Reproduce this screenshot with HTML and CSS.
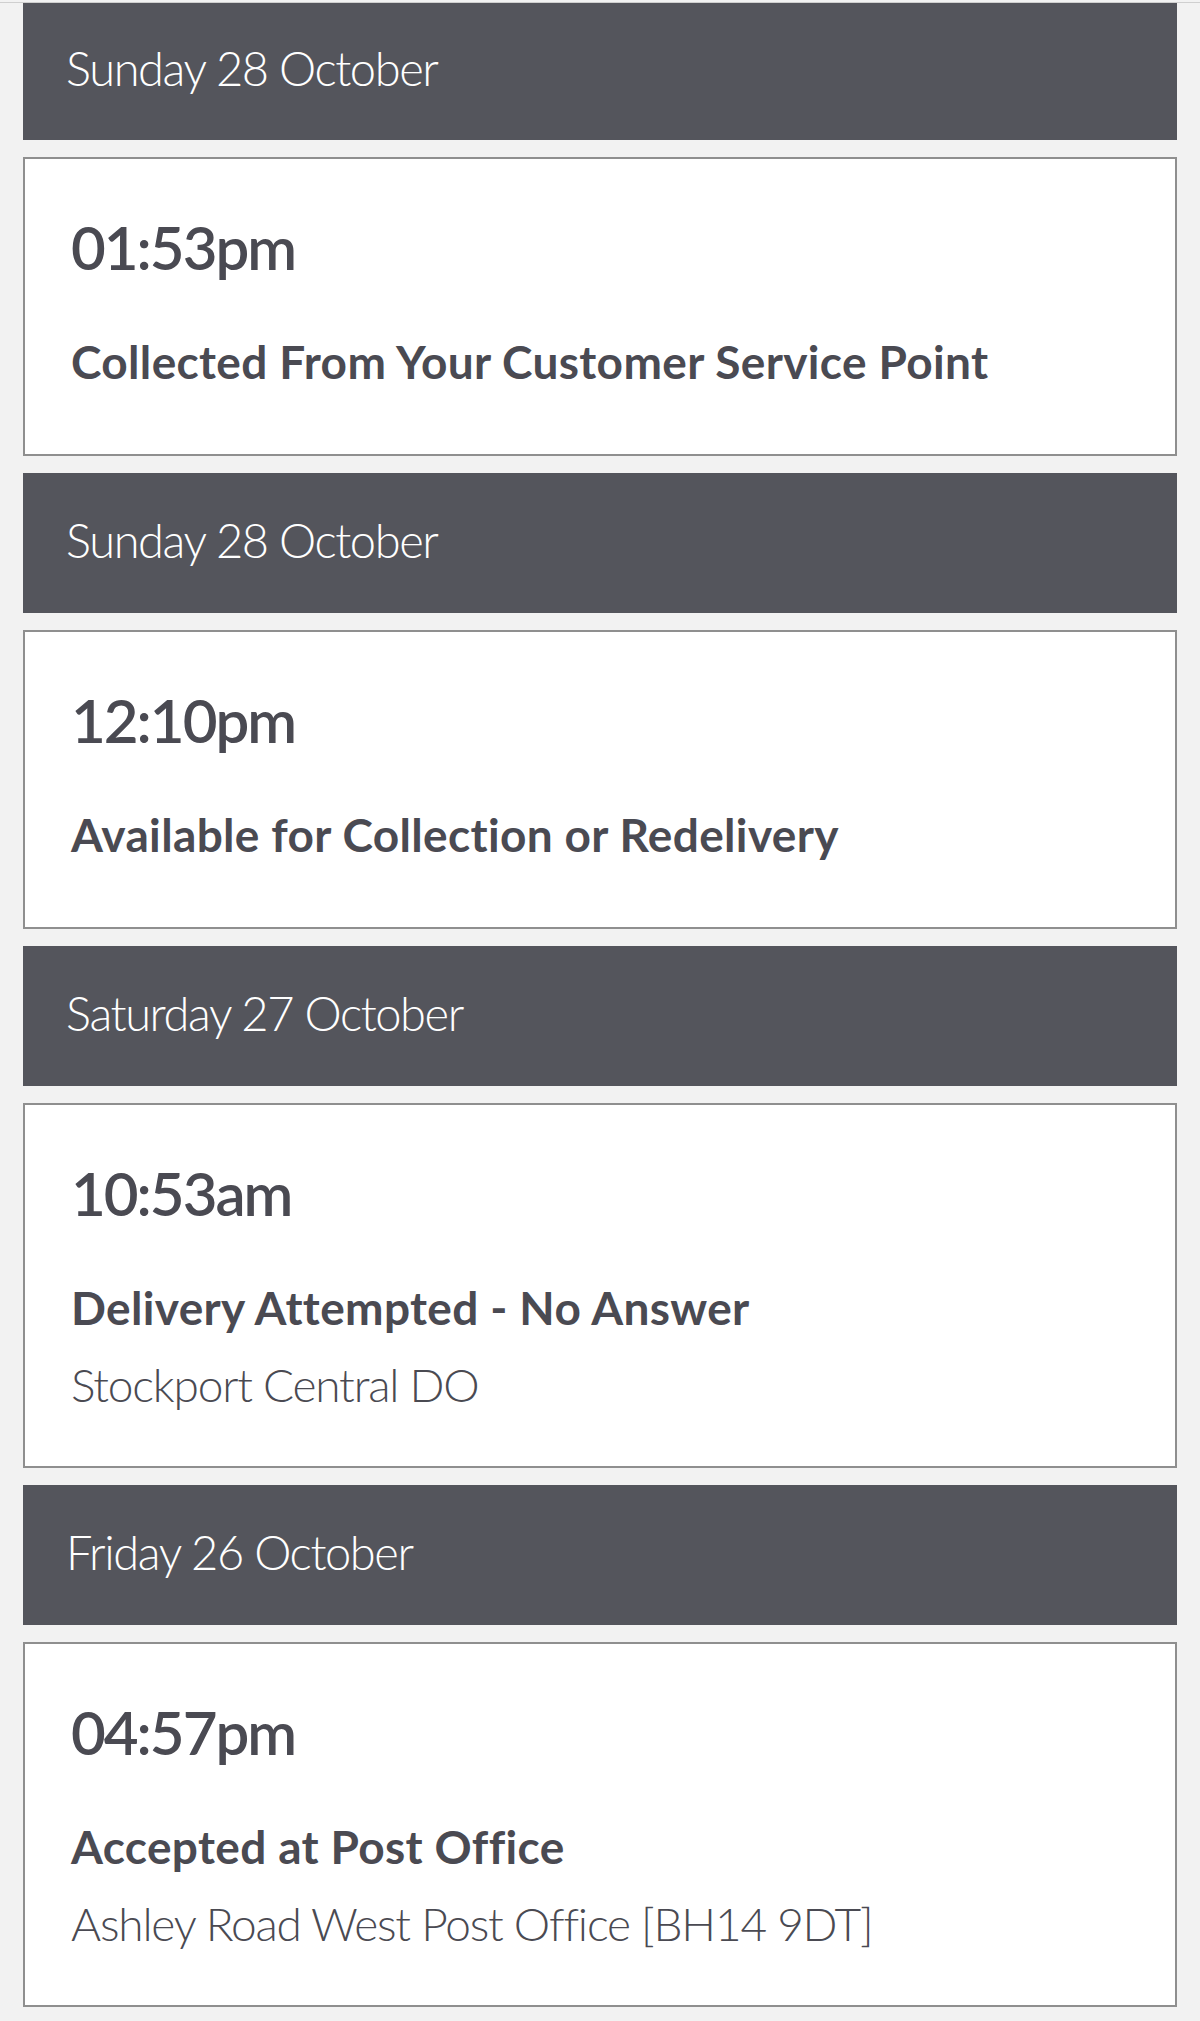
FILE: index.html
```html
<!DOCTYPE html>
<html lang="en">
<head>
<meta charset="UTF-8">
<meta name="viewport" content="width=device-width, initial-scale=1.0">
<title>Tracking history</title>
<link rel="stylesheet" href="styles.css">
</head>
<body>

<div class="history">

  <div class="day">Sunday 28 October</div>
  <div class="event">
    <div class="time">01:53pm</div>
    <div class="status">Collected From Your Customer Service Point</div>
  </div>

  <div class="day">Sunday 28 October</div>
  <div class="event">
    <div class="time">12:10pm</div>
    <div class="status">Available for Collection or Redelivery</div>
  </div>

  <div class="day">Saturday 27 October</div>
  <div class="event">
    <div class="time">10:53am</div>
    <div class="status">Delivery Attempted - No Answer</div>
    <div class="place">Stockport Central DO</div>
  </div>

  <div class="day">Friday 26 October</div>
  <div class="event">
    <div class="time">04:57pm</div>
    <div class="status">Accepted at Post Office</div>
    <div class="place">Ashley Road West Post Office [BH14 9DT]</div>
  </div>

</div>

</body>
</html>
```

FILE: styles.css
```css
body {
  margin: 0;
  background: #f2f2f2;
  font-family: Lato, "Open Sans", sans-serif;
  color: #4a4a52;
}

.history {
  border-top: 1px solid #cfcfcf;
  margin-top: 2px;
  padding: 0 23px;
}

/* date bar */
.day {
  height: 140px;
  box-sizing: border-box;
  padding: 0 0 6px 43px;
  margin-bottom: 17px;
  background: #54555c;
  color: #fff;
  font-size: 47px;
  font-weight: 300;
  line-height: 134px;
  letter-spacing: -1.4px;
}

/* first bar is partly scrolled off the top */
.day:first-child {
  height: 137px;
  line-height: 130px;
}

.event {
  background: #fff;
  border: 2px solid #8f8f8f;
  padding: 52px 46px 53px;
  margin-bottom: 17px;
}

.time {
  font-size: 60px;
  font-weight: 600;
  line-height: 72px;
  letter-spacing: -2px;
}

.status {
  margin: 51px 0 11px;
  font-size: 46px;
  font-weight: 700;
  line-height: 56px;
  letter-spacing: 0.35px;
}

.place {
  margin-top: 21px;
  font-size: 46px;
  font-weight: 300;
  line-height: 56px;
  letter-spacing: -1.2px;
}
```
